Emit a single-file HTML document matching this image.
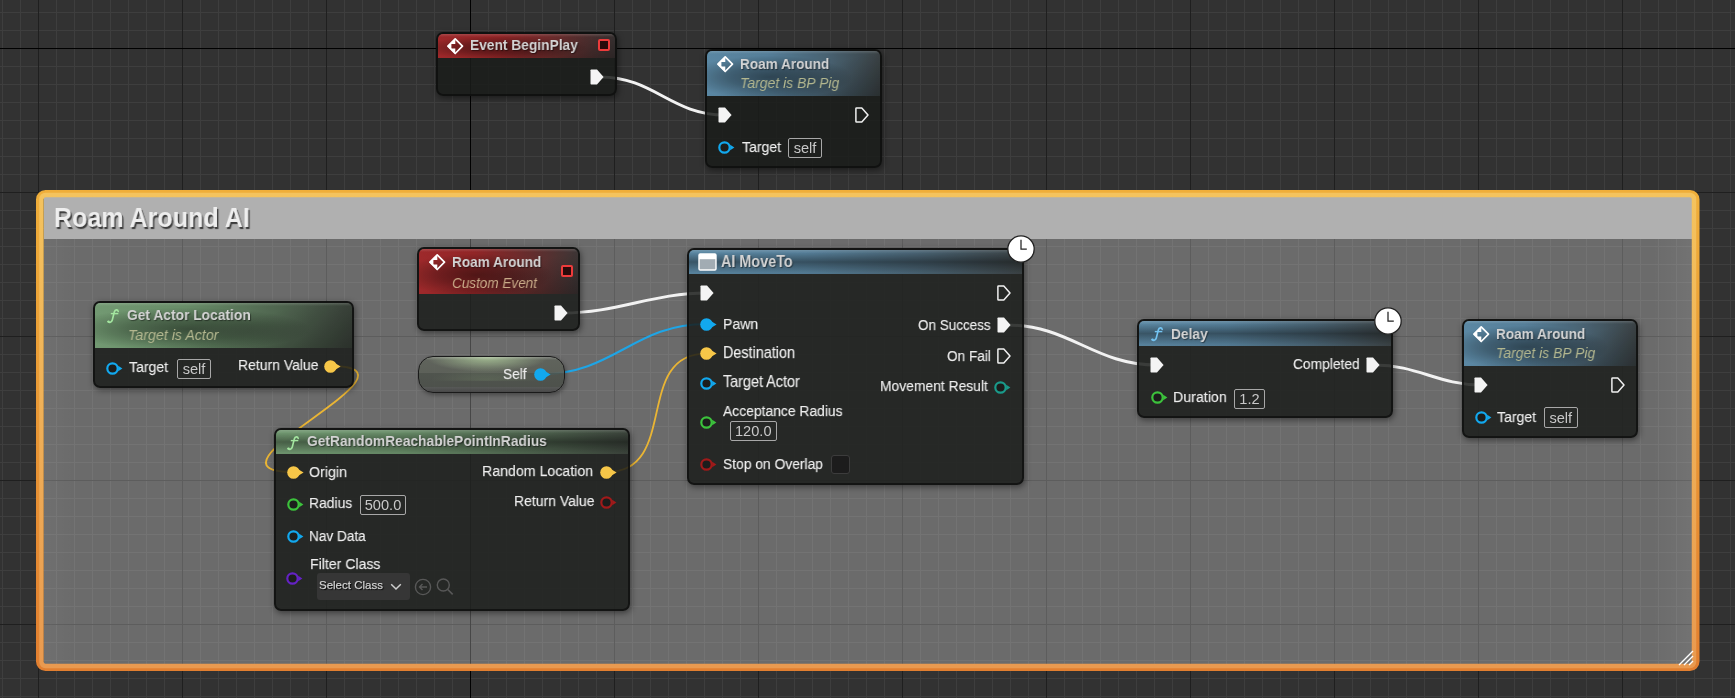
<!DOCTYPE html>
<html><head><meta charset="utf-8">
<style>
*{box-sizing:border-box;margin:0;padding:0}
html,body{width:1735px;height:698px;overflow:hidden}
body{position:relative;background-color:#323232;font-family:"Liberation Sans",sans-serif;
background-image:
linear-gradient(to right,#1f1f1f 1px,transparent 1px),
linear-gradient(to bottom,#1f1f1f 1px,transparent 1px),
linear-gradient(to right,#3e3e3e 1px,transparent 1px),
linear-gradient(to bottom,#3e3e3e 1px,transparent 1px);
background-size:144px 144px,144px 144px,18px 18px,18px 18px;
background-position:38px 0,0 48px,2px 0,0 12px;}
.abs{position:absolute}
svg{position:absolute;overflow:visible}
.origin-v{position:absolute;left:470px;top:0;width:1px;height:698px;background:#000}
.origin-h{position:absolute;left:0;top:48px;width:1735px;height:1px;background:#000}
.ctitle{position:absolute;white-space:nowrap;font-size:27.7px;line-height:30px;font-weight:bold;color:#eeeeee;text-shadow:1.5px 1.5px 1px #3a3a3a;transform:scaleX(0.905);transform-origin:0 0}
.node{position:absolute;border-radius:7px;background:rgba(26,28,26,0.85);border:2px solid rgba(14,14,14,0.75);box-shadow:1px 2px 6px rgba(0,0,0,0.45)}
.hdr{position:absolute;left:0;top:0;right:0;border-radius:5px 5px 0 0;overflow:hidden;opacity:0.93}
.hdr.red{background:linear-gradient(to right,#a82a2c 0%,#9a2628 35%,#6a2e2e 70%,#403838 100%)}
.hdr.blue{background:linear-gradient(to right,#6090ae 0%,#5a86a2 35%,#4c6778 70%,#3e4649 100%)}
.hdr.green{background:linear-gradient(to right,#78a278 0%,#6e956e 35%,#546c54 70%,#3e473e 100%)}
.hdr:before{content:"";position:absolute;left:0;top:0;right:0;bottom:0;
background:linear-gradient(to bottom,rgba(255,255,255,0.16) 0,rgba(255,255,255,0) 3px),radial-gradient(ellipse 48% 48% at 36% 58%,rgba(0,0,0,0.45) 0%,rgba(0,0,0,0.28) 50%,rgba(0,0,0,0) 100%),linear-gradient(165deg,rgba(0,0,0,0) 50%,rgba(0,0,0,0.3) 100%)}
.hdr.one:before{background:linear-gradient(to bottom,rgba(255,255,255,0.16) 0,rgba(255,255,255,0) 3px),linear-gradient(to bottom,rgba(0,0,0,0) 10%,rgba(0,0,0,0.38) 50%,rgba(0,0,0,0.05) 95%)}
.t,.tt,.ts,.box,.ctitle{will-change:transform}
.t{position:absolute;white-space:nowrap;font-size:13.8px;line-height:16px;color:#eeeeee;-webkit-text-stroke:0.25px rgba(238,238,238,0.6)}
.tt{position:absolute;white-space:nowrap;font-size:13.8px;line-height:16px;font-weight:bold;color:#d4d4d4;text-shadow:1px 1px 1px rgba(0,0,0,0.45)}
.ts{position:absolute;white-space:nowrap;font-size:13.8px;line-height:16px;font-style:italic;color:#b3b78f}
.box{position:absolute;border:1px solid #a8a8a8;border-radius:2px;font-size:13.8px;color:#d0d0d0;text-align:center;white-space:nowrap}
.pill{position:absolute;border-radius:15px;border:1.5px solid #1a1a1a;box-shadow:1px 2px 4px rgba(0,0,0,0.35);
background:linear-gradient(to bottom,rgba(255,255,255,0.22) 0,rgba(255,255,255,0) 3px) 0 0/100% 100% no-repeat,
radial-gradient(ellipse 42% 95% at 47% 0%,rgba(180,210,160,0.8),rgba(180,210,160,0) 100%) 0 0/100% 45% no-repeat,
radial-gradient(ellipse 38% 90% at 46% 100%,rgba(140,170,120,0.2),rgba(140,170,120,0) 100%) 0 45%/100% 42% no-repeat,
linear-gradient(to bottom,rgba(96,100,92,0.93) 0%,rgba(92,96,88,0.93) 45%,rgba(78,83,76,0.93) 45%,rgba(76,80,74,0.93) 86%,rgba(86,88,86,0.93) 86%,rgba(70,70,70,0.93) 100%)}
</style></head><body>
<div class="origin-v"></div><div class="origin-h"></div>
<div class="abs" style="left:44px;top:239px;width:1647.5px;height:425px;background:linear-gradient(to right,rgba(255,255,255,0.03),rgba(255,255,255,0) 30px,rgba(255,255,255,0) calc(100% - 40px),rgba(255,255,255,0.05)),rgba(255,255,255,0.28)"></div>
<div class="abs" style="left:44px;top:197px;width:1647.5px;height:42px;background:#b0b0b0"></div>
<svg style="left:0;top:0" width="1735" height="698"><defs><linearGradient id="og" x1="0" y1="0" x2="0" y2="1"><stop offset="0" stop-color="#efae3a"/><stop offset="1" stop-color="#e27f30"/></linearGradient><linearGradient id="og2" x1="0" y1="0" x2="0" y2="1"><stop offset="0" stop-color="#f4c35e"/><stop offset="1" stop-color="#e99a50"/></linearGradient></defs>
<rect x="39.5" y="193.5" width="1656.5" height="474" rx="6" ry="6" fill="none" stroke="url(#og)" stroke-width="7"/>
<rect x="41.5" y="195" width="1652.5" height="471" rx="4" ry="4" fill="none" stroke="url(#og2)" stroke-width="4.5"/></svg>
<div class="ctitle" style="left:54.4px;top:203.4px">Roam Around AI</div>

<svg style="left:0;top:0" width="1735" height="698"><g fill="none" stroke-linecap="round">
<path d="M600,77 C654.3,77 670.7,115 725,115" stroke="#f2f2f2" stroke-width="3"/>
<path d="M563,313 C617.7,313 652.3,293 707,293" stroke="#f2f2f2" stroke-width="3"/>
<path d="M1007,325 C1070.3,325 1093.7,365 1157,365" stroke="#f2f2f2" stroke-width="3"/>
<path d="M1375,365 C1417.0,365 1439.0,385 1481,385" stroke="#f2f2f2" stroke-width="3"/>
<path d="M542,374 C613.3,374 634.7,324 706,324" stroke="#1ea5e6" stroke-width="2"/>
<path d="M330,366 C440.0,366 184.0,472 294,472" stroke="#eab534" stroke-width="1.8"/>
<path d="M607,472 C679.5,472 633.5,353.6 706,353.6" stroke="#eab534" stroke-width="1.8"/>
</g></svg>
<div class="node" style="left:435.5px;top:31.8px;width:181.5px;height:64.7px"><div class="hdr red" style="height:24.1px"></div></div>
<svg style="left:447px;top:37.8px" width="16.4" height="16.4" viewBox="0 0 16.4 16.4"><path d="M8.2,0.9 L15.5,8.2 L8.2,15.5 L0.9,8.2Z" fill="none" stroke="#fff" stroke-width="1.7" stroke-linejoin="round"/><path d="M8.3,0.5 L0.5,8.2 L8.3,15.9 V10.5 H4.4 V5.9 H8.3Z" fill="#fff"/></svg>
<div class="tt" style="left:469.50px;top:37.38px;font-size:15.00px;transform:scaleX(0.9174);transform-origin:0 0;">Event BeginPlay</div>
<div class="abs" style="left:598px;top:39px;width:12px;height:12px;border:2px solid #ee3b3b;border-radius:2px;background:#2a0a0a"></div>
<svg style="left:590px;top:69px" width="14" height="16" viewBox="0 0 14 16"><path d="M1.2,0.5 H7 L13.6,8 L7,15.5 H1.2 Q0.5,15.5 0.5,14.8 V1.2 Q0.5,0.5 1.2,0.5Z" fill="#f4f4f4"/></svg>
<div class="node" style="left:705.1px;top:49.2px;width:177.10000000000002px;height:118.8px"><div class="hdr blue" style="height:44.5px"></div></div>
<svg style="left:716.8px;top:55.8px" width="16.4" height="16.4" viewBox="0 0 16.4 16.4"><path d="M8.2,0.9 L15.5,8.2 L8.2,15.5 L0.9,8.2Z" fill="none" stroke="#fff" stroke-width="1.7" stroke-linejoin="round"/><path d="M8.3,0.5 L0.5,8.2 L8.3,15.9 V10.5 H4.4 V5.9 H8.3Z" fill="#fff"/></svg>
<div class="tt" style="left:739.50px;top:56.14px;font-size:14.82px;transform:scaleX(0.9174);transform-origin:0 0;">Roam Around</div>
<div class="ts" style="left:739.50px;top:75.29px;font-size:15.26px;transform:scaleX(0.9174);transform-origin:0 0;">Target is BP Pig</div>
<svg style="left:718px;top:107px" width="14" height="16" viewBox="0 0 14 16"><path d="M1.2,0.5 H7 L13.6,8 L7,15.5 H1.2 Q0.5,15.5 0.5,14.8 V1.2 Q0.5,0.5 1.2,0.5Z" fill="#f4f4f4"/></svg>
<svg style="left:855px;top:107px" width="14" height="16" viewBox="0 0 14 16"><path d="M1.5,1 H6.8 L13,8 L6.8,15 H1.5 Q0.9,15 0.9,14.4 V1.6 Q0.9,1 1.5,1Z" fill="none" stroke="#f0f0f0" stroke-width="1.5" stroke-linejoin="round"/></svg>
<svg style="left:718.0px;top:141.2px" width="17" height="13" viewBox="0 0 17 13"><circle cx="6.5" cy="6.5" r="5.2" fill="#1c1d1c" stroke="#12a8ee" stroke-width="2.2"/><path d="M12.2,3.7 L16.4,6.5 L12.2,9.3Z" fill="#12a8ee"/></svg>
<div class="t" style="left:742.00px;top:139.17px;font-size:15.33px;transform:scaleX(0.9174);transform-origin:0 0;">Target</div>
<div class="box" style="left:788px;top:137.5px;width:34px;height:20px"></div>
<div class="t" style="left:788px;width:34px;text-align:center;top:139.9px;font-size:14.6px;color:#c8c8c8;-webkit-text-stroke:0">self</div>
<div class="node" style="left:93.1px;top:301.1px;width:260.79999999999995px;height:86.89999999999998px"><div class="hdr green" style="height:44.9px"></div></div>
<svg style="left:106.5px;top:309px" width="12" height="14" viewBox="0 0 12 14"><path d="M11.2,2.4 C10.8,0.3 8,0.3 7.3,3 L5.3,11 C4.7,13.5 2,13.9 1.2,12.6" fill="none" stroke="#a4e6a0" stroke-width="1.6" stroke-linecap="round"/><circle cx="1.5" cy="12.6" r="1.2" fill="#a4e6a0"/><path d="M3.8,4.6 H11.3" stroke="#a4e6a0" stroke-width="1.4"/></svg>
<div class="tt" style="left:127.30px;top:307.36px;font-size:15.06px;transform:scaleX(0.9174);transform-origin:0 0;">Get Actor Location</div>
<div class="ts" style="left:127.50px;top:327.11px;font-size:15.49px;transform:scaleX(0.9174);transform-origin:0 0;">Target is Actor</div>
<svg style="left:106.0px;top:361.5px" width="17" height="13" viewBox="0 0 17 13"><circle cx="6.5" cy="6.5" r="5.2" fill="#1c1d1c" stroke="#12a8ee" stroke-width="2.2"/><path d="M12.2,3.7 L16.4,6.5 L12.2,9.3Z" fill="#12a8ee"/></svg>
<div class="t" style="left:129.40px;top:358.97px;font-size:15.33px;transform:scaleX(0.9174);transform-origin:0 0;">Target</div>
<div class="box" style="left:176.5px;top:358.5px;width:34px;height:20px"></div>
<div class="t" style="left:176.5px;width:34px;text-align:center;top:360.9px;font-size:14.6px;color:#c8c8c8;-webkit-text-stroke:0">self</div>
<div class="t" style="left:237.50px;top:357.01px;font-size:15.22px;transform:scaleX(0.9174);transform-origin:0 0;">Return Value</div>
<svg style="left:323.5px;top:359.5px" width="17" height="13" viewBox="0 0 17 13"><circle cx="6.5" cy="6.5" r="6.3" fill="#f7c748"/><path d="M11.2,3.3 L16.6,6.5 L11.2,9.7Z" fill="#f7c748"/></svg>
<div class="node" style="left:417.3px;top:247.3px;width:162.49999999999994px;height:84.09999999999997px"><div class="hdr red" style="height:44.6px"></div></div>
<svg style="left:429px;top:254px" width="16.4" height="16.4" viewBox="0 0 16.4 16.4"><path d="M8.2,0.9 L15.5,8.2 L8.2,15.5 L0.9,8.2Z" fill="none" stroke="#fff" stroke-width="1.7" stroke-linejoin="round"/><path d="M8.3,0.5 L0.5,8.2 L8.3,15.9 V10.5 H4.4 V5.9 H8.3Z" fill="#fff"/></svg>
<div class="tt" style="left:451.70px;top:253.84px;font-size:14.82px;transform:scaleX(0.9174);transform-origin:0 0;">Roam Around</div>
<div class="ts" style="left:451.70px;top:274.67px;font-size:14.75px;transform:scaleX(0.9174);transform-origin:0 0;color:#c9aa88">Custom Event</div>
<div class="abs" style="left:561px;top:264.5px;width:12px;height:12px;border:2px solid #ee3b3b;border-radius:2px;background:#2a0a0a"></div>
<svg style="left:553.5px;top:305px" width="14" height="16" viewBox="0 0 14 16"><path d="M1.2,0.5 H7 L13.6,8 L7,15.5 H1.2 Q0.5,15.5 0.5,14.8 V1.2 Q0.5,0.5 1.2,0.5Z" fill="#f4f4f4"/></svg>
<div class="pill" style="left:417.5px;top:355.5px;width:147px;height:37.5px"></div>
<div class="t" style="left:502.80px;top:366.41px;font-size:14.91px;transform:scaleX(0.9174);transform-origin:0 0;">Self</div>
<svg style="left:533.5px;top:367.5px" width="17" height="13" viewBox="0 0 17 13"><circle cx="6.5" cy="6.5" r="6.3" fill="#12a8ee"/><path d="M11.2,3.3 L16.6,6.5 L11.2,9.7Z" fill="#12a8ee"/></svg>
<div class="node" style="left:687.3px;top:247.6px;width:336.9000000000001px;height:237.1px"><div class="hdr blue one" style="height:24.4px"></div></div>
<svg style="left:697.5px;top:252.5px" width="19" height="18" viewBox="0 0 19 18"><rect x="1" y="1" width="17" height="16" rx="1.2" fill="#a2acb3" stroke="#fff" stroke-width="1.4"/><rect x="1" y="1" width="17" height="5.2" fill="#fff"/></svg>
<div class="tt" style="left:721.10px;top:253.74px;font-size:15.70px;transform:scaleX(0.9174);transform-origin:0 0;">AI MoveTo</div>
<svg style="left:1006.5px;top:235.3px" width="28" height="28" viewBox="0 0 28 28"><circle cx="14" cy="14" r="13.2" fill="#fff" stroke="#222" stroke-width="1.3"/><path d="M14,4.8 V14.2 H19.8" fill="none" stroke="#222" stroke-width="1.25"/></svg>
<svg style="left:700px;top:285px" width="14" height="16" viewBox="0 0 14 16"><path d="M1.2,0.5 H7 L13.6,8 L7,15.5 H1.2 Q0.5,15.5 0.5,14.8 V1.2 Q0.5,0.5 1.2,0.5Z" fill="#f4f4f4"/></svg>
<svg style="left:997px;top:285px" width="14" height="16" viewBox="0 0 14 16"><path d="M1.5,1 H6.8 L13,8 L6.8,15 H1.5 Q0.9,15 0.9,14.4 V1.6 Q0.9,1 1.5,1Z" fill="none" stroke="#f0f0f0" stroke-width="1.5" stroke-linejoin="round"/></svg>
<svg style="left:699.5px;top:317.5px" width="17" height="13" viewBox="0 0 17 13"><circle cx="6.5" cy="6.5" r="6.3" fill="#12a8ee"/><path d="M11.2,3.3 L16.6,6.5 L11.2,9.7Z" fill="#12a8ee"/></svg>
<div class="t" style="left:723.20px;top:315.66px;font-size:15.35px;transform:scaleX(0.9174);transform-origin:0 0;">Pawn</div>
<div class="t" style="left:918.30px;top:316.69px;font-size:14.70px;transform:scaleX(0.9174);transform-origin:0 0;">On Success</div>
<svg style="left:997px;top:317px" width="14" height="16" viewBox="0 0 14 16"><path d="M1.2,0.5 H7 L13.6,8 L7,15.5 H1.2 Q0.5,15.5 0.5,14.8 V1.2 Q0.5,0.5 1.2,0.5Z" fill="#f4f4f4"/></svg>
<svg style="left:699.5px;top:347.1px" width="17" height="13" viewBox="0 0 17 13"><circle cx="6.5" cy="6.5" r="6.3" fill="#f7c748"/><path d="M11.2,3.3 L16.6,6.5 L11.2,9.7Z" fill="#f7c748"/></svg>
<div class="t" style="left:723.20px;top:344.55px;font-size:15.68px;transform:scaleX(0.9174);transform-origin:0 0;">Destination</div>
<div class="t" style="left:946.50px;top:347.73px;font-size:14.87px;transform:scaleX(0.9174);transform-origin:0 0;">On Fail</div>
<svg style="left:997px;top:348.3px" width="14" height="16" viewBox="0 0 14 16"><path d="M1.5,1 H6.8 L13,8 L6.8,15 H1.5 Q0.9,15 0.9,14.4 V1.6 Q0.9,1 1.5,1Z" fill="none" stroke="#f0f0f0" stroke-width="1.5" stroke-linejoin="round"/></svg>
<svg style="left:699.5px;top:376.8px" width="17" height="13" viewBox="0 0 17 13"><circle cx="6.5" cy="6.5" r="5.2" fill="#1c1d1c" stroke="#12a8ee" stroke-width="2.2"/><path d="M12.2,3.7 L16.4,6.5 L12.2,9.3Z" fill="#12a8ee"/></svg>
<div class="t" style="left:723.20px;top:374.34px;font-size:15.70px;transform:scaleX(0.9174);transform-origin:0 0;">Target Actor</div>
<div class="t" style="left:879.60px;top:378.24px;font-size:15.12px;transform:scaleX(0.9174);transform-origin:0 0;">Movement Result</div>
<svg style="left:993.5px;top:380.5px" width="17" height="13" viewBox="0 0 17 13"><circle cx="6.5" cy="6.5" r="5.2" fill="#1c1d1c" stroke="#1a9a8a" stroke-width="2.2"/><path d="M12.2,3.7 L16.4,6.5 L12.2,9.3Z" fill="#1a9a8a"/></svg>
<svg style="left:699.5px;top:415.8px" width="17" height="13" viewBox="0 0 17 13"><circle cx="6.5" cy="6.5" r="5.2" fill="#1c1d1c" stroke="#3cc23c" stroke-width="2.2"/><path d="M12.2,3.7 L16.4,6.5 L12.2,9.3Z" fill="#3cc23c"/></svg>
<div class="t" style="left:723.20px;top:402.93px;font-size:15.14px;transform:scaleX(0.9174);transform-origin:0 0;">Acceptance Radius</div>
<div class="box" style="left:729.5px;top:420.6px;width:46.5px;height:20px"></div>
<div class="t" style="left:729.5px;width:46.5px;text-align:center;top:423.0px;font-size:14.6px;color:#c8c8c8;-webkit-text-stroke:0">120.0</div>
<svg style="left:699.5px;top:457.7px" width="17" height="13" viewBox="0 0 17 13"><circle cx="6.5" cy="6.5" r="5.2" fill="#1c1d1c" stroke="#a01a1a" stroke-width="2.2"/><path d="M12.2,3.7 L16.4,6.5 L12.2,9.3Z" fill="#a01a1a"/></svg>
<div class="t" style="left:723.20px;top:456.15px;font-size:15.09px;transform:scaleX(0.9174);transform-origin:0 0;">Stop on Overlap</div>
<div class="abs" style="left:830.5px;top:454.5px;width:19.5px;height:19.5px;background:#1c1c1c;border:1px solid #3c3c3c;border-radius:3px"></div>
<div class="node" style="left:273.8px;top:428px;width:356.09999999999997px;height:182.79999999999995px"><div class="hdr green one" style="height:23.8px"></div></div>
<svg style="left:287px;top:435.5px" width="12" height="14" viewBox="0 0 12 14"><path d="M11.2,2.4 C10.8,0.3 8,0.3 7.3,3 L5.3,11 C4.7,13.5 2,13.9 1.2,12.6" fill="none" stroke="#a4e6a0" stroke-width="1.6" stroke-linecap="round"/><circle cx="1.5" cy="12.6" r="1.2" fill="#a4e6a0"/><path d="M3.8,4.6 H11.3" stroke="#a4e6a0" stroke-width="1.4"/></svg>
<div class="tt" style="left:307.30px;top:433.37px;font-size:15.04px;transform:scaleX(0.9174);transform-origin:0 0;">GetRandomReachablePointInRadius</div>
<svg style="left:287.3px;top:466.0px" width="17" height="13" viewBox="0 0 17 13"><circle cx="6.5" cy="6.5" r="6.3" fill="#f7c748"/><path d="M11.2,3.3 L16.6,6.5 L11.2,9.7Z" fill="#f7c748"/></svg>
<div class="t" style="left:309.30px;top:463.69px;font-size:15.55px;transform:scaleX(0.9174);transform-origin:0 0;">Origin</div>
<div class="t" style="left:482.30px;top:463.42px;font-size:15.46px;transform:scaleX(0.9174);transform-origin:0 0;">Random Location</div>
<svg style="left:600.3px;top:466.0px" width="17" height="13" viewBox="0 0 17 13"><circle cx="6.5" cy="6.5" r="6.3" fill="#f7c748"/><path d="M11.2,3.3 L16.6,6.5 L11.2,9.7Z" fill="#f7c748"/></svg>
<svg style="left:287.3px;top:497.5px" width="17" height="13" viewBox="0 0 17 13"><circle cx="6.5" cy="6.5" r="5.2" fill="#1c1d1c" stroke="#3cc23c" stroke-width="2.2"/><path d="M12.2,3.7 L16.4,6.5 L12.2,9.3Z" fill="#3cc23c"/></svg>
<div class="t" style="left:309.30px;top:495.33px;font-size:15.15px;transform:scaleX(0.9174);transform-origin:0 0;">Radius</div>
<div class="box" style="left:359.5px;top:494.5px;width:46px;height:19.5px"></div>
<div class="t" style="left:359.5px;width:46px;text-align:center;top:496.9px;font-size:14.6px;color:#c8c8c8;-webkit-text-stroke:0">500.0</div>
<div class="t" style="left:513.50px;top:493.11px;font-size:15.22px;transform:scaleX(0.9174);transform-origin:0 0;">Return Value</div>
<svg style="left:600.0px;top:495.8px" width="17" height="13" viewBox="0 0 17 13"><circle cx="6.5" cy="6.5" r="5.2" fill="#1c1d1c" stroke="#a01a1a" stroke-width="2.2"/><path d="M12.2,3.7 L16.4,6.5 L12.2,9.3Z" fill="#a01a1a"/></svg>
<svg style="left:287.3px;top:529.5px" width="17" height="13" viewBox="0 0 17 13"><circle cx="6.5" cy="6.5" r="5.2" fill="#1c1d1c" stroke="#12a8ee" stroke-width="2.2"/><path d="M12.2,3.7 L16.4,6.5 L12.2,9.3Z" fill="#12a8ee"/></svg>
<div class="t" style="left:309.30px;top:527.64px;font-size:14.82px;transform:scaleX(0.9174);transform-origin:0 0;">Nav Data</div>
<div class="t" style="left:309.60px;top:555.95px;font-size:15.37px;transform:scaleX(0.9174);transform-origin:0 0;">Filter Class</div>
<svg style="left:285.9px;top:572.4px" width="17" height="13" viewBox="0 0 17 13"><circle cx="6.5" cy="6.5" r="5.2" fill="#1c1d1c" stroke="#6422c4" stroke-width="2.2"/><path d="M12.2,3.7 L16.4,6.5 L12.2,9.3Z" fill="#6422c4"/></svg>
<div class="abs" style="left:317.3px;top:573.2px;width:92.4px;height:26.4px;background:#363636;border-radius:3px"></div>
<div class="t" style="left:319.4px;top:578px;font-size:11.5px;line-height:14px;color:#cfcfcf;text-shadow:1px 1px 1px #000">Select Class</div>
<svg style="left:390px;top:583px" width="12" height="8" viewBox="0 0 12 8"><path d="M1.2,1.2 L6,6 L10.8,1.2" fill="none" stroke="#cfcfcf" stroke-width="1.5"/></svg>
<svg style="left:414px;top:578px" width="40" height="18" viewBox="0 0 40 18"><circle cx="9" cy="9" r="7.6" fill="none" stroke="#585858" stroke-width="1.4"/><path d="M13,9 H5.5 M8.5,6 L5.5,9 L8.5,12" fill="none" stroke="#585858" stroke-width="1.4"/><circle cx="29.3" cy="7" r="6" fill="none" stroke="#585858" stroke-width="1.4"/><path d="M33.5,11.3 L38.7,16.4" stroke="#585858" stroke-width="1.6"/></svg>
<div class="node" style="left:1137.4px;top:319.2px;width:255.39999999999986px;height:99.30000000000001px"><div class="hdr blue one" style="height:25px"></div></div>
<svg style="left:1151px;top:327px" width="12" height="14" viewBox="0 0 12 14"><path d="M11.2,2.4 C10.8,0.3 8,0.3 7.3,3 L5.3,11 C4.7,13.5 2,13.9 1.2,12.6" fill="none" stroke="#74c4f2" stroke-width="1.6" stroke-linecap="round"/><circle cx="1.5" cy="12.6" r="1.2" fill="#74c4f2"/><path d="M3.8,4.6 H11.3" stroke="#74c4f2" stroke-width="1.4"/></svg>
<div class="tt" style="left:1171.40px;top:325.87px;font-size:15.02px;transform:scaleX(0.9174);transform-origin:0 0;">Delay</div>
<svg style="left:1374.4px;top:307px" width="28" height="28" viewBox="0 0 28 28"><circle cx="14" cy="14" r="13.2" fill="#fff" stroke="#222" stroke-width="1.3"/><path d="M14,4.8 V14.2 H19.8" fill="none" stroke="#222" stroke-width="1.25"/></svg>
<svg style="left:1150px;top:357px" width="14" height="16" viewBox="0 0 14 16"><path d="M1.2,0.5 H7 L13.6,8 L7,15.5 H1.2 Q0.5,15.5 0.5,14.8 V1.2 Q0.5,0.5 1.2,0.5Z" fill="#f4f4f4"/></svg>
<div class="t" style="left:1292.80px;top:356.07px;font-size:15.04px;transform:scaleX(0.9174);transform-origin:0 0;">Completed</div>
<svg style="left:1366px;top:357px" width="14" height="16" viewBox="0 0 14 16"><path d="M1.2,0.5 H7 L13.6,8 L7,15.5 H1.2 Q0.5,15.5 0.5,14.8 V1.2 Q0.5,0.5 1.2,0.5Z" fill="#f4f4f4"/></svg>
<svg style="left:1151.1px;top:391.3px" width="17" height="13" viewBox="0 0 17 13"><circle cx="6.5" cy="6.5" r="5.2" fill="#1c1d1c" stroke="#3cc23c" stroke-width="2.2"/><path d="M12.2,3.7 L16.4,6.5 L12.2,9.3Z" fill="#3cc23c"/></svg>
<div class="t" style="left:1173.40px;top:388.90px;font-size:15.51px;transform:scaleX(0.9174);transform-origin:0 0;">Duration</div>
<div class="box" style="left:1234px;top:388.5px;width:31px;height:19.5px"></div>
<div class="t" style="left:1234px;width:31px;text-align:center;top:390.9px;font-size:14.6px;color:#c8c8c8;-webkit-text-stroke:0">1.2</div>
<div class="node" style="left:1461.6px;top:319.3px;width:176.60000000000014px;height:118.59999999999997px"><div class="hdr blue" style="height:44.8px"></div></div>
<svg style="left:1473px;top:326px" width="16.4" height="16.4" viewBox="0 0 16.4 16.4"><path d="M8.2,0.9 L15.5,8.2 L8.2,15.5 L0.9,8.2Z" fill="none" stroke="#fff" stroke-width="1.7" stroke-linejoin="round"/><path d="M8.3,0.5 L0.5,8.2 L8.3,15.9 V10.5 H4.4 V5.9 H8.3Z" fill="#fff"/></svg>
<div class="tt" style="left:1495.50px;top:325.84px;font-size:14.82px;transform:scaleX(0.9174);transform-origin:0 0;">Roam Around</div>
<div class="ts" style="left:1495.50px;top:344.89px;font-size:15.26px;transform:scaleX(0.9174);transform-origin:0 0;">Target is BP Pig</div>
<svg style="left:1474.2px;top:377px" width="14" height="16" viewBox="0 0 14 16"><path d="M1.2,0.5 H7 L13.6,8 L7,15.5 H1.2 Q0.5,15.5 0.5,14.8 V1.2 Q0.5,0.5 1.2,0.5Z" fill="#f4f4f4"/></svg>
<svg style="left:1611px;top:377px" width="14" height="16" viewBox="0 0 14 16"><path d="M1.5,1 H6.8 L13,8 L6.8,15 H1.5 Q0.9,15 0.9,14.4 V1.6 Q0.9,1 1.5,1Z" fill="none" stroke="#f0f0f0" stroke-width="1.5" stroke-linejoin="round"/></svg>
<svg style="left:1474.5px;top:410.9px" width="17" height="13" viewBox="0 0 17 13"><circle cx="6.5" cy="6.5" r="5.2" fill="#1c1d1c" stroke="#12a8ee" stroke-width="2.2"/><path d="M12.2,3.7 L16.4,6.5 L12.2,9.3Z" fill="#12a8ee"/></svg>
<div class="t" style="left:1497.40px;top:409.07px;font-size:15.33px;transform:scaleX(0.9174);transform-origin:0 0;">Target</div>
<div class="box" style="left:1544.2px;top:407.2px;width:33.5px;height:20.5px"></div>
<div class="t" style="left:1544.2px;width:33.5px;text-align:center;top:409.6px;font-size:14.6px;color:#c8c8c8;-webkit-text-stroke:0">self</div>
<svg style="left:1676px;top:648px" width="20" height="20" viewBox="0 0 20 20"><path d="M3,17 L17,3 M8,17 L17,8 M13,17 L17,13" stroke="#fff" stroke-width="1.4"/></svg>
</body></html>
